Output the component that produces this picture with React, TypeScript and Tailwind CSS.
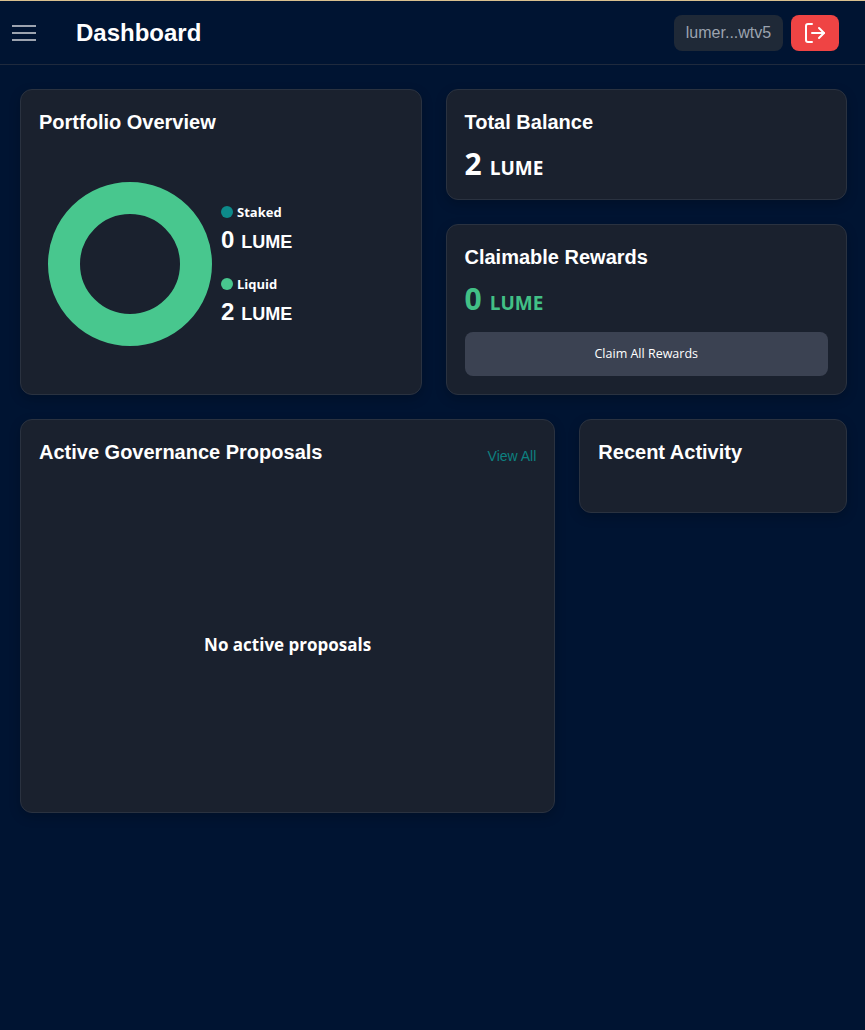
import { LogOut } from "lucide-react";

const headingFont = "font-['Liberation_Sans',Arial,sans-serif]";
const bodyFont = "font-['Open_Sans','Noto_Sans',sans-serif]";

const cardClass =
  "rounded-xl border border-[#2a3240] bg-[#1a212e] shadow-[0_4px_12px_rgba(0,0,0,0.2)]";

const Legend = ({ label, value, dot }: { label: string; value: string; dot: string }) => (
  <div>
    <div className="flex items-center gap-1 h-4">
      <span className={`w-3 h-3 rounded-full ${dot}`} />
      <span className={`${bodyFont} text-[13px] font-bold text-white leading-4`}>{label}</span>
    </div>
    <div className={`${headingFont} mt-1 font-bold text-white leading-8 h-8 flex items-baseline`}>
      <span className="text-2xl">{value}</span>
      <span className="text-lg ml-[7px]">LUME</span>
    </div>
  </div>
);

const App = () => {
  return (
    <div className="min-h-[1030px] bg-[#001432] text-white border-t border-[#d9c08f]">
      <header className="h-16 border-b border-[#1f2a3d] flex items-center justify-between pl-3 pr-[26px]">
        <div className="flex items-center">
          <div className="w-6 flex flex-col gap-[5px]">
            <span className="block h-0.5 bg-[#9ca3af]" />
            <span className="block h-0.5 bg-[#9ca3af]" />
            <span className="block h-0.5 bg-[#9ca3af]" />
          </div>
          <h1 className={`${headingFont} ml-10 text-2xl font-bold`}>Dashboard</h1>
        </div>
        <div className="flex items-center gap-2">
          <div className={`${headingFont} h-9 w-[109px] flex items-center justify-center rounded-lg bg-[#1f2937] text-base text-[#9ca3af]`}>
            lumer...wtv5
          </div>
          <button className="h-9 w-12 flex items-center justify-center rounded-lg bg-[#ef4444] text-white">
            <LogOut size={24} />
          </button>
        </div>
      </header>

      <main className="pl-5 pr-[18px] pt-6">
        <div className="grid grid-cols-2 gap-6">
          <section className={`${cardClass} h-[306px] px-[18px] pt-[18px]`}>
            <h2 className={`${headingFont} text-xl font-bold leading-7`}>Portfolio Overview</h2>
            <div className="flex items-center mt-[46px] ml-[9px]">
              <svg width="164" height="164" viewBox="0 0 164 164">
                <circle cx="82" cy="82" r="66" fill="none" stroke="#48c78e" strokeWidth="32" />
              </svg>
              <div className="ml-[9px] flex flex-col gap-5 mt-[3px]">
                <Legend label="Staked" value="0" dot="bg-[#0d8a8a]" />
                <Legend label="Liquid" value="2" dot="bg-[#48c78e]" />
              </div>
            </div>
          </section>

          <div className="flex flex-col gap-6">
            <section className={`${cardClass} h-[111px] px-[18px] pt-[18px]`}>
              <h2 className={`${headingFont} text-xl font-bold leading-7`}>Total Balance</h2>
              <div className={`${bodyFont} mt-2 font-bold flex items-baseline leading-10`}>
                <span className="text-[30px]">2</span>
                <span className="text-[19px] ml-2">LUME</span>
              </div>
            </section>

            <section className={`${cardClass} h-[171px] px-[18px] pt-[18px]`}>
              <h2 className={`${headingFont} text-xl font-bold leading-7`}>Claimable Rewards</h2>
              <div className={`${bodyFont} mt-2 font-bold flex items-baseline leading-10 text-[#42c086]`}>
                <span className="text-[30px]">0</span>
                <span className="text-[19px] ml-2">LUME</span>
              </div>
              <button className={`${bodyFont} mt-[9px] w-full h-11 rounded-lg bg-[#3b4252] text-[12.5px] text-white`}>
                Claim All Rewards
              </button>
            </section>
          </div>
        </div>

        <div className="grid grid-cols-[2fr_1fr] gap-6 mt-6 items-start">
          <section className={`${cardClass} h-[394px] px-[18px] pt-[18px] flex flex-col`}>
            <div className="flex items-start justify-between">
              <h2 className={`${headingFont} text-xl font-bold leading-7`}>Active Governance Proposals</h2>
              <a className={`${headingFont} mt-1.5 text-sm text-[#0d8080] leading-6`}>View All</a>
            </div>
            <div className={`${bodyFont} flex-1 flex items-center justify-center font-bold text-[17px] pt-[9px]`}>
              No active proposals
            </div>
          </section>

          <section className={`${cardClass} h-[94px] px-[18px] pt-[18px]`}>
            <h2 className={`${headingFont} text-xl font-bold leading-7`}>Recent Activity</h2>
          </section>
        </div>
      </main>
    </div>
  );
};

export default App;
